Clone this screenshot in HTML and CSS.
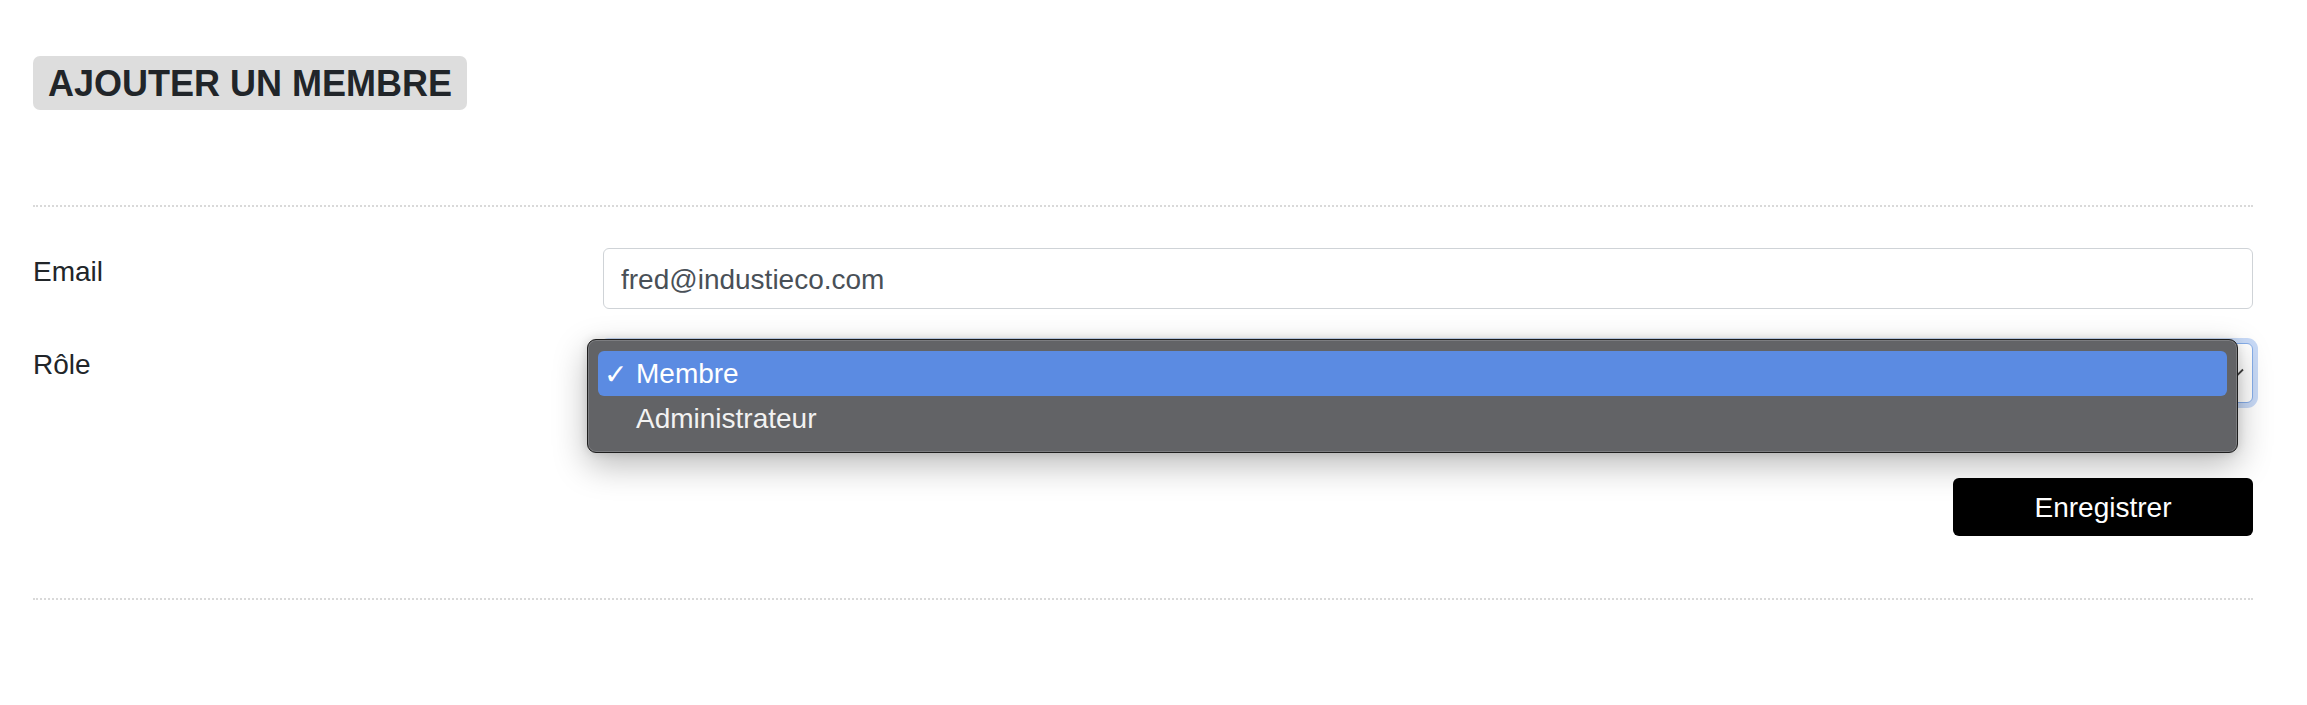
FILE: index.html
```html
<!DOCTYPE html>
<html lang="fr">
<head>
<meta charset="utf-8">
<title>Ajouter un membre</title>
<link rel="stylesheet" href="styles.css">
</head>
<body>
<div class="page">
  <h1 class="title">AJOUTER UN MEMBRE</h1>
  <hr class="sep sep-top">
  <form class="form">
    <div class="row">
      <label class="label" for="email">Email</label>
      <div class="field">
        <input class="input" id="email" type="text" value="fred@industieco.com">
      </div>
    </div>
    <div class="row row-role">
      <label class="label">Rôle</label>
      <div class="field select-wrap">
        <div class="select">
          <svg class="chev" width="16" height="10" viewBox="0 0 16 10"><path d="M1 1.5 L8 8.5 L15 1.5" fill="none" stroke="#444" stroke-width="1.8"/></svg>
        </div>
        <div class="popup">
          <div class="opt opt-sel"><span class="check">✓</span>Membre</div>
          <div class="opt">Administrateur</div>
        </div>
      </div>
    </div>
    <div class="actions">
      <button type="button" class="btn">Enregistrer</button>
    </div>
  </form>
  <hr class="sep sep-bottom">
</div>
</body>
</html>
```
FILE: styles.css
```css
html, body {
  margin: 0;
  padding: 0;
  background: #ffffff;
}
body {
  font-family: "Liberation Sans", Arial, Helvetica, sans-serif;
  color: #212529;
}
.page {
  padding: 56px 54px 80px 33px;
}
.title {
  display: inline-block;
  margin: 0;
  background: #dddddd;
  border-radius: 7px;
  padding: 2px 15px 0;
  height: 52px;
  line-height: 52px;
  font-size: 36px;
  font-weight: 700;
  color: #212529;
}
.sep {
  border: 0;
  border-top: 2px dotted #d9d9d9;
  margin: 0;
  height: 0;
}
.sep-top {
  margin-top: 95px;
}
.form {
  margin-top: 41px;
}
.row {
  display: grid;
  grid-template-columns: 570px 1fr;
  align-items: start;
}
.row-role {
  margin-top: 34px;
}
.label {
  font-size: 28px;
  line-height: 41px;
  padding-top: 3px;
  color: #212529;
}
.row-role .label {
  padding-top: 1px;
}
.input {
  box-sizing: border-box;
  display: block;
  width: 100%;
  height: 61px;
  border: 1.5px solid #cfd3d7;
  border-radius: 6px;
  padding: 3px 17px 0;
  font-family: "Liberation Sans", Arial, Helvetica, sans-serif;
  font-size: 28px;
  color: #495057;
  background: #fff;
  outline: none;
}
.select-wrap {
  position: relative;
}
.select {
  box-sizing: border-box;
  height: 60px;
  border: 1.5px solid #86aeea;
  border-radius: 6px;
  box-shadow: 0 0 0 5px #c8daf7;
  background: #fff;
  display: flex;
  align-items: center;
  justify-content: flex-end;
  padding-right: 8px;
}
.chev {
  display: block;
}
.popup {
  position: absolute;
  left: -16px;
  right: 15px;
  top: -4px;
  box-sizing: border-box;
  padding: 11px 10px;
  background: #626366;
  border: 1px solid #1e1e1e;
  border-radius: 9px;
  box-shadow: inset 0 0 0 1px #7c7d80, 0 12px 34px rgba(0, 0, 0, 0.28), 0 0 10px rgba(0, 0, 0, 0.12);
}
.opt {
  height: 45px;
  line-height: 45px;
  padding-left: 38px;
  position: relative;
  font-size: 28px;
  color: #f2f2f2;
  border-radius: 6px;
}
.opt-sel {
  background: #5b8be2;
  color: #ffffff;
}
.check {
  position: absolute;
  left: 6px;
  top: 1px;
  font-size: 28px;
  font-weight: 700;
  font-family: "DejaVu Sans", sans-serif;
}
.actions {
  display: flex;
  justify-content: flex-end;
  margin-top: 75px;
}
.btn {
  width: 300px;
  height: 58px;
  background: #000;
  color: #fff;
  border: 0;
  border-radius: 6px;
  font-family: "Liberation Sans", Arial, Helvetica, sans-serif;
  font-size: 28px;
  padding: 2px 0 0;
  cursor: pointer;
}
.sep-bottom {
  margin-top: 62px;
}
```
